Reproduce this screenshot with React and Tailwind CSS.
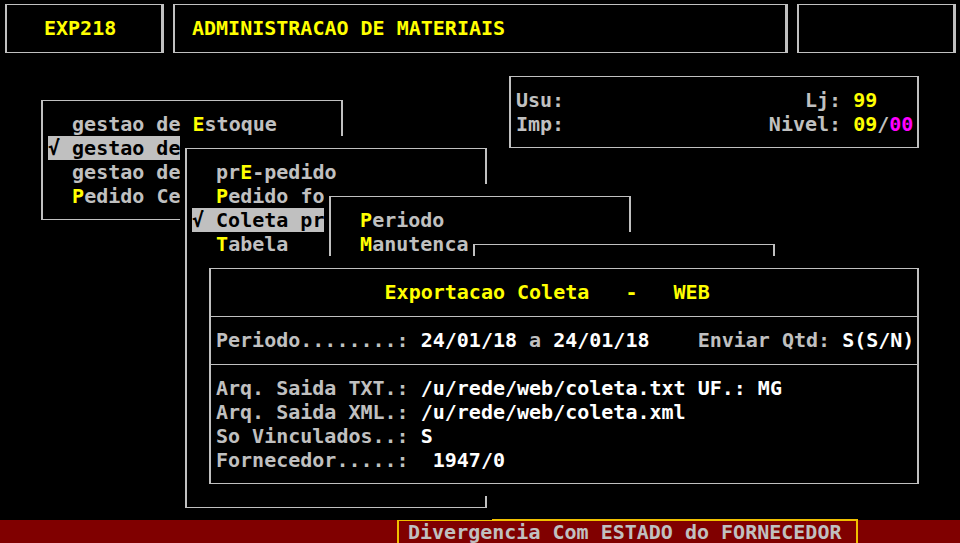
const Y = ({ children }) => <span className="text-[#ffff00]">{children}</span>;
const W = ({ children }) => <span className="text-white">{children}</span>;

function Sep() {
  return (
    <div className="-ml-[5px] flex h-[24px] items-center">
      <div className="h-px w-full bg-[#c0c0c0]" />
    </div>
  );
}

export default function App() {
  return (
    <div className="relative flex h-[543px] w-[960px] flex-col overflow-hidden whitespace-pre bg-black font-['DejaVu_Sans_Mono',monospace] text-[20px] font-bold leading-[24px] text-[#c0c0c0]">
      {/* top header boxes */}
      <div className="flex gap-[9px] pl-[5px] pt-[4px]">
        <div className="h-[49px] w-[159px] border-y border-l-2 border-r-[3px] border-[#c0c0c0] pl-[37px] pt-[11px] text-[#ffff00]">
          EXP218
        </div>
        <div className="h-[49px] w-[615px] border-y border-l-2 border-r-[3px] border-[#c0c0c0] pl-[17px] pt-[11px] text-[#ffff00]">
          ADMINISTRACAO DE MATERIAIS
        </div>
        <div className="h-[49px] w-[159px] border-y border-l-2 border-r-[3px] border-[#c0c0c0]" />
      </div>

      {/* main menu */}
      <div className="absolute left-[36px] top-[88px] h-[144px] w-[312px] overflow-hidden bg-black px-[5px] py-[12px]">
        <div className="h-full border-x-2 border-y border-[#c0c0c0] pl-[5px] pt-[11px]">
          <div>  gestao de <Y>E</Y>stoque</div>
          <div className="w-fit bg-[#c0c0c0] text-black">√ gestao de</div>
          <div>  gestao de</div>
          <div>  <Y>P</Y>edido Ce</div>
        </div>
      </div>

      {/* user info */}
      <div className="absolute left-[504px] top-[64px] h-[96px] w-[420px] bg-black px-[5px] py-[12px]">
        <div className="h-full border-x-2 border-y border-[#c0c0c0] pl-[5px] pt-[11px]">
          <div>Usu:                    Lj: <Y>99</Y></div>
          <div>Imp:                 Nivel: <Y>09</Y>/<span className="text-[#ff00ff]">00</span></div>
        </div>
      </div>

      {/* compras submenu */}
      <div className="absolute left-[180px] top-[136px] h-[384px] w-[312px] overflow-hidden bg-black px-[5px] py-[12px]">
        <div className="h-full border-x-2 border-y border-[#c0c0c0] pl-[5px] pt-[11px]">
          <div>  pr<Y>E</Y>-pedido</div>
          <div>  <Y>P</Y>edido fo</div>
          <div className="w-fit bg-[#c0c0c0] text-black">√ Coleta pr</div>
          <div>  <Y>T</Y>abela</div>
        </div>
      </div>

      {/* coleta submenu */}
      <div className="absolute left-[324px] top-[184px] h-[96px] w-[312px] overflow-hidden bg-black px-[5px] py-[12px]">
        <div className="h-full border-x-2 border-y border-[#c0c0c0] pl-[5px] pt-[11px]">
          <div>  <Y>P</Y>eriodo</div>
          <div>  <Y>M</Y>anutenca</div>
        </div>
      </div>

      <div className="absolute left-[468px] top-[232px] h-[48px] w-[312px] bg-black px-[5px] py-[12px]">
        <div className="h-full border-x-2 border-y border-[#c0c0c0]" />
      </div>

      {/* export dialog */}
      <div className="absolute left-[204px] top-[256px] h-[240px] w-[720px] overflow-hidden bg-black px-[5px] py-[12px]">
        <div className="h-full border-x-2 border-y border-[#c0c0c0] pl-[5px] pt-[11px]">
          <div className="text-[#ffff00]">              Exportacao Coleta   -   WEB</div>
          <Sep />
          <div>Periodo........: <W>24/01/18</W> a <W>24/01/18</W>    Enviar Qtd: <W>S(S/N)</W></div>
          <Sep />
          <div>Arq. Saida TXT.: <W>/u/rede/web/coleta.txt UF.: MG</W></div>
          <div>Arq. Saida XML.: <W>/u/rede/web/coleta.xml</W></div>
          <div>So Vinculados..: <W>S</W></div>
          <div>Fornecedor.....:  <W>1947/0</W></div>
        </div>
      </div>

      {/* status line */}
      <div className="mt-auto h-[23px] bg-[#800000]">
        <div className="-mt-px ml-[397px] h-[26px] w-[461px] border-2 border-[#f0c000] pl-[9px] leading-[22px]">
          Divergencia Com ESTADO do FORNECEDOR
        </div>
      </div>
    </div>
  );
}
